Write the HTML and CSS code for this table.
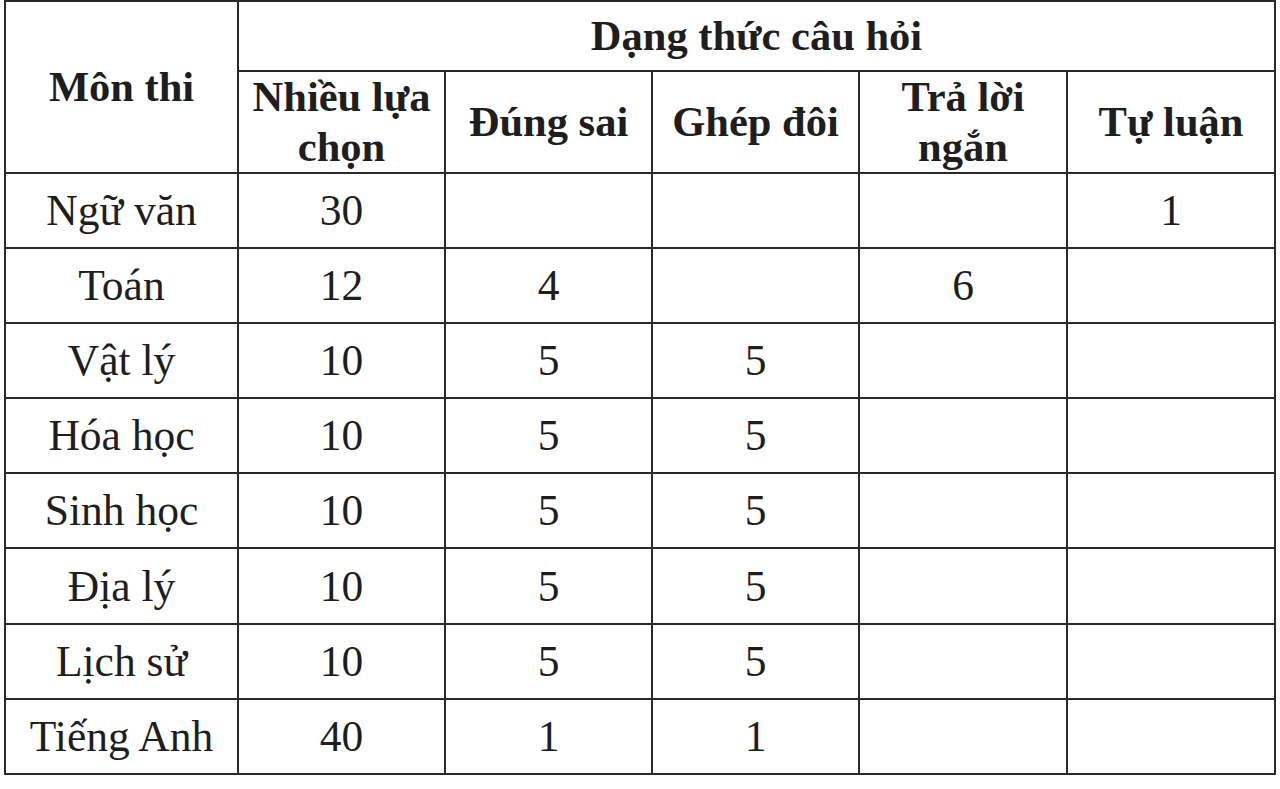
FILE: index.html
```html
<!DOCTYPE html>
<html lang="vi">
<head>
<meta charset="utf-8">
<title>Dạng thức câu hỏi</title>
<link rel="stylesheet" href="styles.css">
</head>
<body>
<table class="exam">
  <colgroup>
    <col class="c-subject">
    <col class="c-a">
    <col class="c-a">
    <col class="c-a">
    <col class="c-b">
    <col class="c-b">
  </colgroup>
  <thead>
    <tr class="r-top">
      <th rowspan="2" class="subject-head">Môn thi</th>
      <th colspan="5">Dạng thức câu hỏi</th>
    </tr>
    <tr class="r-sub">
      <th>Nhiều lựa<br>chọn</th>
      <th>Đúng sai</th>
      <th>Ghép đôi</th>
      <th>Trả lời<br>ngắn</th>
      <th>Tự luận</th>
    </tr>
  </thead>
  <tbody>
    <tr><td>Ngữ văn</td><td>30</td><td></td><td></td><td></td><td>1</td></tr>
    <tr><td>Toán</td><td>12</td><td>4</td><td></td><td>6</td><td></td></tr>
    <tr><td>Vật lý</td><td>10</td><td>5</td><td>5</td><td></td><td></td></tr>
    <tr><td>Hóa học</td><td>10</td><td>5</td><td>5</td><td></td><td></td></tr>
    <tr><td>Sinh học</td><td>10</td><td>5</td><td>5</td><td></td><td></td></tr>
    <tr class="r-tall"><td>Địa lý</td><td>10</td><td>5</td><td>5</td><td></td><td></td></tr>
    <tr><td>Lịch sử</td><td>10</td><td>5</td><td>5</td><td></td><td></td></tr>
    <tr><td>Tiếng Anh</td><td>40</td><td>1</td><td>1</td><td></td><td></td></tr>
  </tbody>
</table>
</body>
</html>
```

FILE: styles.css
```css
html, body {
  margin: 0;
  padding: 0;
  background: #ffffff;
}

body {
  font-family: "Liberation Serif", "Times New Roman", serif;
  color: #1e1e1e;
}

.exam {
  margin: 0 0 0 4px;
  width: 1272px;
  table-layout: fixed;
  border-collapse: separate;
  border-spacing: 0;
  border-left: 2px solid #2a2a2a;
  border-top: 2px solid #2a2a2a;
}

.c-subject { width: 233px; }
.c-a { width: 207px; }
.c-b { width: 208px; }

.exam th,
.exam td {
  padding: 0;
  border-right: 2px solid #2a2a2a;
  border-bottom: 2px solid #2a2a2a;
  text-align: center;
  vertical-align: middle;
  overflow: hidden;
  white-space: nowrap;
}

.exam th {
  font-size: 42.5px;
  font-weight: bold;
  line-height: 50px;
}

.exam td {
  font-size: 43.5px;
  font-weight: normal;
  line-height: 47px;
}

.r-top { height: 70px; }
.r-sub { height: 101px; }
.exam tbody tr { height: 75px; }
.exam tbody tr.r-tall { height: 76px; }
```
